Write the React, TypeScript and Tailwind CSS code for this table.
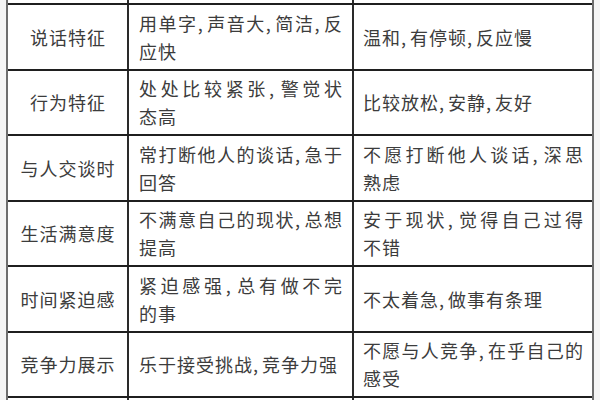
import React from "react";

type Row = {
  label: string;
  fast: string[];
  slow: string[];
};

const rows: Row[] = [
  { label: "说话特征", fast: ["用单字,声音大,简洁,反", "应快"], slow: ["温和,有停顿,反应慢"] },
  { label: "行为特征", fast: ["处处比较紧张,警觉状", "态高"], slow: ["比较放松,安静,友好"] },
  { label: "与人交谈时", fast: ["常打断他人的谈话,急于", "回答"], slow: ["不愿打断他人谈话,深思", "熟虑"] },
  { label: "生活满意度", fast: ["不满意自己的现状,总想", "提高"], slow: ["安于现状,觉得自己过得", "不错"] },
  { label: "时间紧迫感", fast: ["紧迫感强,总有做不完", "的事"], slow: ["不太着急,做事有条理"] },
  { label: "竞争力展示", fast: ["乐于接受挑战,竞争力强"], slow: ["不愿与人竞争,在乎自己的", "感受"] },
];

function Text({ value }: { value: string }) {
  const parts = value.split(",");
  return (
    <>
      {parts.map((p, i) => (
        <React.Fragment key={i}>
          {p}
          {i < parts.length - 1 && <span className="mr-[3px]">,</span>}
        </React.Fragment>
      ))}
    </>
  );
}

function Lines({ lines, width }: { lines: string[]; width: string }) {
  return (
    <div className={width}>
      {lines.map((line, i) => (
        <div
          key={i}
          className={
            lines.length > 1 && i === 0
              ? "whitespace-nowrap text-justify [text-align-last:justify]"
              : "whitespace-nowrap"
          }
        >
          <Text value={line} />
        </div>
      ))}
    </div>
  );
}

export default function App() {
  return (
    <div className="w-[600px] h-[400px] overflow-hidden bg-[#f5f5f5] pl-[6px] font-['Noto_Sans_CJK_SC','Noto_Sans',sans-serif] text-[18px] leading-[28px] tracking-[1px] text-[#3c3c3c]">
      <div className="w-[588px] bg-white border-x-2 border-[#6e6e6e]">
        <div className="grid grid-cols-[121px_225px_238px] h-[3px]">
          <div className="border-r-2 border-[#2a2a2a]" />
          <div className="border-r-2 border-[#2a2a2a]" />
          <div />
        </div>
        {rows.map((row) => (
          <div
            key={row.label}
            className="grid grid-cols-[121px_225px_238px] h-[65.5px] border-t-2 border-[#1f1f1f]"
          >
            <div className="flex items-center justify-center border-r-2 border-[#2a2a2a] pl-[1px]">
              {row.label}
            </div>
            <div className="flex items-center border-r-2 border-[#2a2a2a] pl-[10px]">
              <Lines lines={row.fast} width="w-[204px]" />
            </div>
            <div className="flex items-center pl-[9px]">
              <Lines lines={row.slow} width="w-[221px]" />
            </div>
          </div>
        ))}
        <div className="grid grid-cols-[121px_225px_238px] h-[10px] border-t-2 border-[#1f1f1f]">
          <div className="border-r-2 border-[#2a2a2a]" />
          <div className="border-r-2 border-[#2a2a2a]" />
          <div />
        </div>
      </div>
    </div>
  );
}
